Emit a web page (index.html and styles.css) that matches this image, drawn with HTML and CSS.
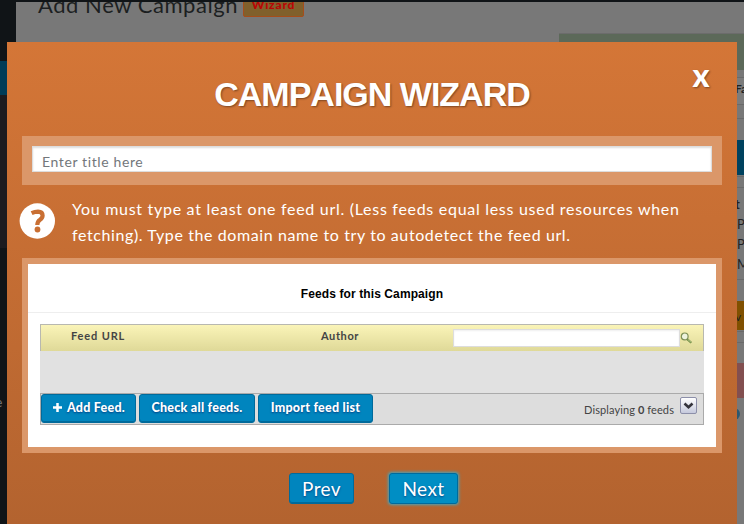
FILE: index.html
```
<!DOCTYPE html>
<html lang="en">
<head>
<meta charset="utf-8">
<title>Campaign Wizard</title>
<link rel="stylesheet" href="styles.css">
</head>
<body>
<div class="page">
  <nav class="side"><div class="side-current"></div><div class="side-sub"></div><span class="side-text">e</span></nav>
  <main class="main">
    <div class="page-head"><h1>Add New Campaign</h1><span class="tag">Wizard</span></div>
    <aside class="meta">
      <div class="green"></div>
      <div class="row fa">Fa</div>
      <div class="row plain"></div>
      <div class="blue"></div>
      <div class="row small"></div>
      <div class="list"><b>t</b><span>P</span><span>P</span><span>M</span></div>
      <div class="gold">v</div>
      <div class="row small"></div>
      <div class="red"></div>
      <div class="last"><i class="dot"></i></div>
    </aside>
  </main>
</div>

<section class="wizard">
  <button class="close" aria-label="Close">x</button>
  <h2 class="title">CAMPAIGN WIZARD</h2>
  <div class="frame title-frame"><input type="text" placeholder="Enter title here"></div>
  <div class="help">
    <svg width="36" height="36" viewBox="0 0 36 36"><circle cx="18.3" cy="18" r="17.7" fill="#fff"/><path d="M12.6 10.2Q15.8 8.6 19 8.6Q23.6 8.8 23.6 12.4Q23.6 14.8 21 16.7Q18.3 18.5 18.3 22" fill="none" stroke="#c96f33" stroke-width="4.2"/><circle cx="18.5" cy="26.5" r="2.9" fill="#c96f33"/></svg>
    <p><span class="line-a">You must type at least one feed url. (Less feeds equal less used resources when</span><br><span class="line-b">fetching). Type the domain name to try to autodetect the feed url.</span></p>
  </div>
  <div class="frame feeds-frame">
    <div class="feeds">
      <h3>Feeds for this Campaign</h3>
      <div class="table">
        <div class="thead">
          <span class="col-url">Feed URL</span><span class="col-author">Author</span>
          <input type="text" class="search" aria-label="Search">
          <svg width="13" height="13" viewBox="0 0 13 13"><path d="M7 7L11.3 10.8" stroke="#6f8b42" stroke-width="2.2"/><path d="M8 7.6L11 10.2" stroke="#c6d49a" stroke-width=".8"/><circle cx="4.7" cy="4.4" r="3.4" fill="#eef3dd" stroke="#7d8f55" stroke-width="1.2"/></svg>
        </div>
        <div class="tbody"></div>
        <div class="tfoot">
          <button class="btn add"><svg width="11" height="11" viewBox="0 0 11 11"><path d="M5.5 1V10M1 5.5H10" stroke="#fff" stroke-width="2.5"/></svg>Add Feed.</button>
          <button class="btn check">Check all feeds.</button>
          <button class="btn import">Import feed list</button>
          <span class="count">Displaying <b>0</b> feeds</span>
          <span class="more"><svg width="15" height="15" viewBox="0 0 15 15"><path d="M3.5 5.5L7.5 9.3L11.5 5.5" fill="none" stroke="#34343c" stroke-width="2.6"/></svg></span>
        </div>
      </div>
    </div>
  </div>
  <div class="nav"><button class="btn prev">Prev</button><button class="btn next">Next</button></div>
</section>
</body>
</html>
```
FILE: styles.css
```
* { box-sizing: border-box; }
body { margin: 0; width: 744px; height: 524px; overflow: hidden; position: relative; font-family: Lato, "Noto Sans", sans-serif; background: #787878; }
h1, h2, h3, p { margin: 0; font-weight: 400; }
button, input { font-family: inherit; margin: 0; }
.page { display: flex; height: 524px; border-top: 2px solid #101417; }
.side { width: 16px; background: #101417; padding-top: 59px; }
.side-current { height: 34px; background: #003c57; }
.side-sub { height: 153px; background: #1c1b1f; }
.side-text { display: block; margin: 145px 0 0 -5px; font-size: 14px; line-height: 18px; color: #777; }
.main { flex: 1; overflow: hidden; }
.page-head { display: flex; height: 31px; padding-left: 22px; color: #1c1f21; }
h1 { width: 205px; font-size: 22px; line-height: 26px; margin-top: -10px; letter-spacing: .55px; white-space: nowrap; }
.tag { height: 19px; width: 61px; margin-top: -4px; border: 1px solid #a64d1a; border-radius: 2px; background: #80602c; color: #b90505; font: 900 12px/12px Lato, sans-serif; letter-spacing: .8px; text-align: center; }
.meta { margin-left: 543px; color: #222; font-size: 12px; }
.green { height: 37px; background: #5c6959; border-top: 1px solid #6c6c6c; }
.row { border: 1px solid #6a6a6a; border-width: 1px 0; }
.fa { height: 28px; margin-top: 7px; padding-left: 176px; font-weight: 700; line-height: 22px; background: #7c7c7c; }
.plain { height: 14px; border-top: 0; }
.blue { margin-top: 21px; height: 35px; background: #00425f; }
.row.small { height: 12px; margin-top: 1px; }
.list { height: 92px; padding-left: 178px; display: flex; flex-direction: column; font-size: 13px; line-height: 20px; border-bottom: 1px solid #6a6a6a; }
.list b { margin: 6px 0 0 -2px; }
.gold { height: 29px; margin-top: 21px; padding-left: 176px; background: #805000; line-height: 32px; }
.red { height: 35px; margin-top: 20px; background: #824f50; }
.last { padding: 10px 0 0 169px; }
.dot { display: block; width: 12px; height: 12px; border-radius: 50%; background: #2c5870; }

.wizard { position: absolute; left: 7px; top: 42px; width: 730px; height: 482px; padding: 33px 15px 0; background: linear-gradient(#d47637, #b3632f); }
.close { position: absolute; left: 680px; top: 15px; width: 28px; height: 36px; padding: 0; border: 0; background: none; color: #fff; font: 900 32px/36px Lato, sans-serif; text-shadow: 1px 1px 2px #0006; }
.title { height: 61px; text-align: center; color: #fff; font: 700 34px/38px "Liberation Sans", sans-serif; font-kerning: none; letter-spacing: -1px; text-shadow: 1px 1px 2px #0006; }
.frame { background: #db9769; }
.title-frame { height: 49px; padding: 10px; }
.title-frame input { display: block; width: 680px; height: 26px; padding: 5px 9px 0; border: 1px solid #ddd; box-shadow: inset 0 1px 2px #0002; font-size: 14px; letter-spacing: .62px; background: #fff; outline: none; }
.title-frame input::placeholder { color: #73777b; }
.help { display: flex; height: 73px; padding-top: 11px; color: #fff; }
.help svg { margin: 7px 17px 0 -3px; flex: none; }
.help p { font-size: 16px; line-height: 26px; white-space: nowrap; }
.line-a { letter-spacing: .71px; }
.line-b { letter-spacing: .6px; }
.feeds-frame { height: 195px; padding: 6px; }
.feeds { height: 183px; background: #fff; }
h3 { height: 49px; border-bottom: 1px solid #eee; padding-top: 20px; text-align: center; color: #000; font: 700 12px/20px "Liberation Sans", sans-serif; letter-spacing: .1px; }
.table { margin: 11px 12px 0; height: 101px; }
.thead { display: flex; height: 27px; border: 1px solid #b8b8b0; border-bottom: 0; background: linear-gradient(#faf4b8, #dfd998); color: #444; font-weight: 700; font-size: 11px; line-height: 22px; padding-left: 30px; }
.col-url { width: 250px; letter-spacing: .85px; }
.col-author { width: 132px; letter-spacing: .6px; }
.search { width: 227px; height: 18px; margin-top: 4px; border: 1px solid #ddd; box-shadow: inset 0 1px 2px #0001; background: #fff; }
.thead svg { margin: 7px 0 0 0; }
.tbody { height: 42px; background: #e1e1e1; }
.tfoot { display: flex; height: 32px; border: 1px solid #aaa; background: #ddd; }
.btn { padding: 0; border: 1px solid #006a9b; border-radius: 3px; background: #0085be; color: #fff; box-shadow: inset 0 -1px #006a9b; text-shadow: 0 1px 2px #0058; white-space: nowrap; }
.tfoot .btn { height: 29px; margin-right: 3px; font-size: 12.5px; font-weight: 900; line-height: 25px; letter-spacing: .25px; padding-bottom: 2px; }
.add { width: 95px; }
.add svg { margin-right: 4px; vertical-align: -1px; }
.check { width: 116px; }
.import { width: 115px; }
.count { margin-left: auto; margin-right: 6px; color: #444; font-size: 11px; line-height: 31px; letter-spacing: .1px; }
.more { width: 17px; height: 17px; margin: 3px 6px 0 0; border: 1px solid #8c8fa9; border-radius: 2px; background: linear-gradient(#fff, #c5c9dc); }
.more svg { display: block; }
.nav { display: flex; gap: 35px; padding: 20px 0 0 267px; }
.nav .btn { height: 31px; font-size: 19px; line-height: 28px; letter-spacing: .4px; }
.prev { width: 65px; }
.next { width: 69px; }
.nav .next { background: #008ec4; box-shadow: 0 0 3px 1px #43a5bd; }
```
